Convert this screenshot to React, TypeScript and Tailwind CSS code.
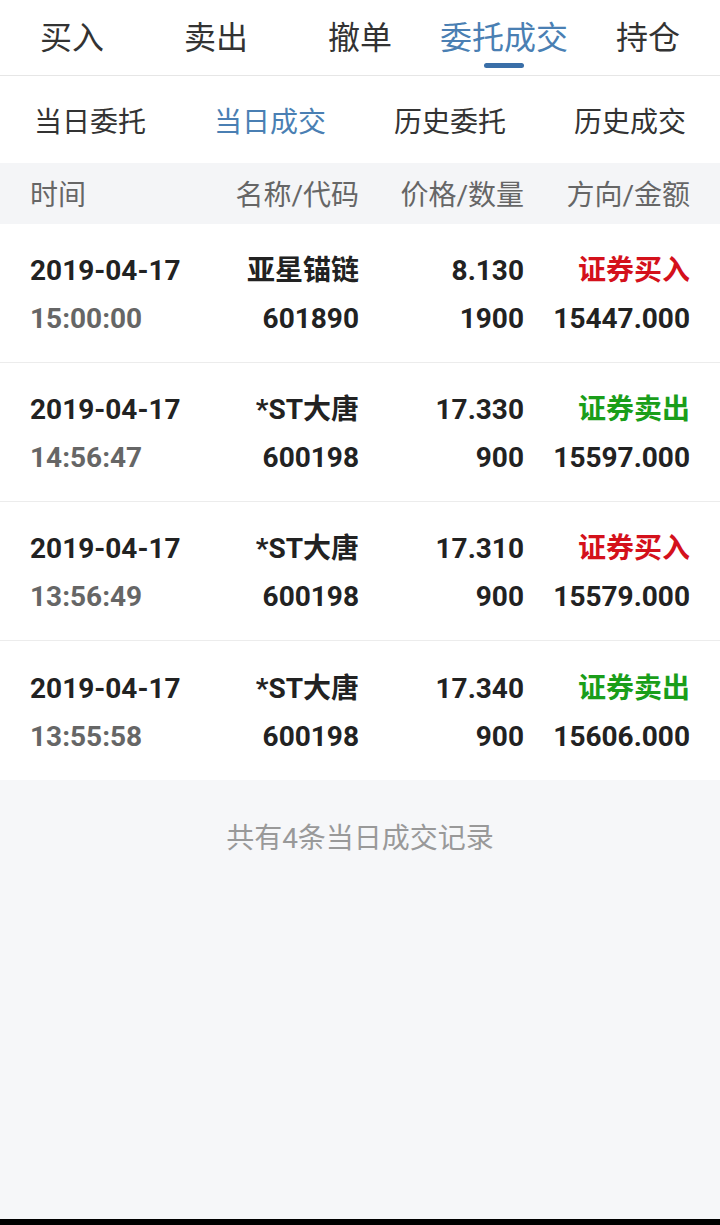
const tabs = ["买入", "卖出", "撤单", "委托成交", "持仓"];
const subTabs = ["当日委托", "当日成交", "历史委托", "历史成交"];

type Trade = {
  date: string;
  time: string;
  name: string;
  code: string;
  price: string;
  qty: string;
  dir: "买入" | "卖出";
  amount: string;
};

const trades: Trade[] = [
  { date: "2019-04-17", time: "15:00:00", name: "亚星锚链", code: "601890", price: "8.130", qty: "1900", dir: "买入", amount: "15447.000" },
  { date: "2019-04-17", time: "14:56:47", name: "*ST大唐", code: "600198", price: "17.330", qty: "900", dir: "卖出", amount: "15597.000" },
  { date: "2019-04-17", time: "13:56:49", name: "*ST大唐", code: "600198", price: "17.310", qty: "900", dir: "买入", amount: "15579.000" },
  { date: "2019-04-17", time: "13:55:58", name: "*ST大唐", code: "600198", price: "17.340", qty: "900", dir: "卖出", amount: "15606.000" },
];

function TradeRow({ t, last }: { t: Trade; last: boolean }) {
  return (
    <div
      className={
        "flex h-[139px] flex-col justify-center px-[30px] pt-[4px] font-bold text-[28px] leading-[48px] text-[#222] " +
        (last ? "" : "border-b border-[#ececec]")
      }
    >
      <div className="flex">
        <div className="w-[164px]">{t.date}</div>
        <div className="w-[165px] text-right">{t.name}</div>
        <div className="w-[165px] text-right">{t.price}</div>
        <div className={"w-[166px] text-right " + (t.dir === "买入" ? "text-[#d4111b]" : "text-[#1a9e1a]")}>
          证券{t.dir}
        </div>
      </div>
      <div className="flex">
        <div className="w-[164px] text-[#666]">{t.time}</div>
        <div className="w-[165px] text-right">{t.code}</div>
        <div className="w-[165px] text-right">{t.qty}</div>
        <div className="w-[166px] text-right">{t.amount}</div>
      </div>
    </div>
  );
}

export default function App() {
  return (
    <div
      className="flex h-[1225px] w-[720px] flex-col overflow-hidden bg-[#f6f7f9]"
      style={{ fontFamily: "Roboto, 'Noto Sans CJK SC', sans-serif" }}
    >
      <div className="flex h-[76px] shrink-0 border-b border-[#e6e6e6] bg-white">
        {tabs.map((tab) => {
          const active = tab === "委托成交";
          return (
            <div key={tab} className="relative flex flex-1 items-center justify-center pt-[1px]">
              <span className={"text-[32px] leading-none " + (active ? "text-[#4a7fb3]" : "text-[#333]")}>{tab}</span>
              {active && (
                <span className="absolute left-1/2 top-[63px] h-[5px] w-[40px] -translate-x-1/2 rounded-full bg-[#3a6fa8]" />
              )}
            </div>
          );
        })}
      </div>

      <div className="flex h-[87px] shrink-0 bg-white">
        {subTabs.map((s) => (
          <div
            key={s}
            className={"flex flex-1 items-center justify-center pt-[6px] text-[28px] " + (s === "当日成交" ? "text-[#4a7fb3]" : "text-[#333]")}
          >
            {s}
          </div>
        ))}
      </div>

      <div className="flex h-[61px] shrink-0 items-center bg-[#f4f5f7] px-[30px] pt-[5px] text-[28px] text-[#666]">
        <div className="w-[164px]">时间</div>
        <div className="w-[165px] text-right">名称/代码</div>
        <div className="w-[165px] text-right">价格/数量</div>
        <div className="w-[166px] text-right">方向/金额</div>
      </div>

      <div className="bg-white">
        {trades.map((t, i) => (
          <TradeRow key={i} t={t} last={i === trades.length - 1} />
        ))}
      </div>

      <div className="pt-[38px] text-center text-[28px] text-[#999]">共有4条当日成交记录</div>

      <div className="mt-auto h-[6px] bg-black" />
    </div>
  );
}
